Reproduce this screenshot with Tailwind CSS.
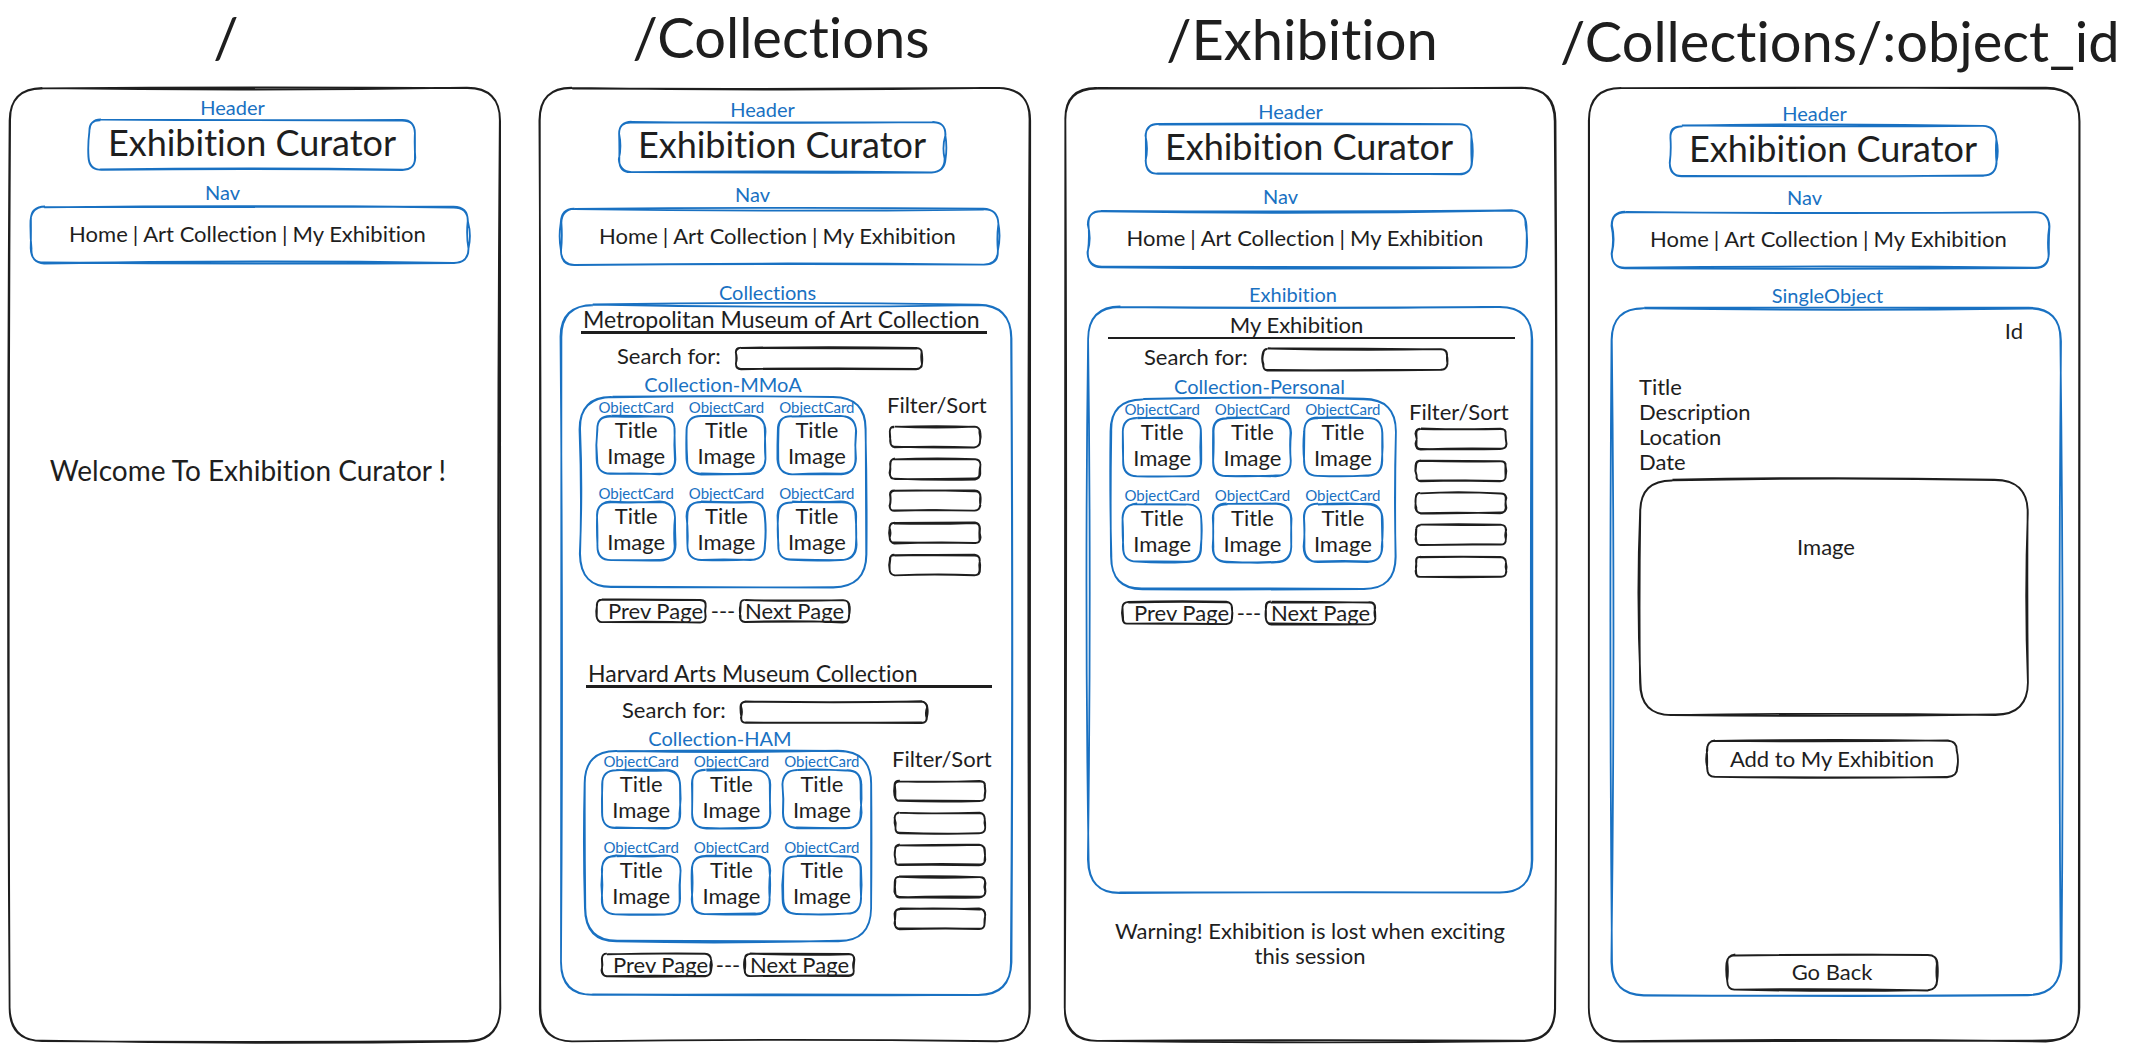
<!DOCTYPE html>
<html lang="en">
<head>
<meta charset="utf-8">
<meta name="viewport" content="width=device-width, initial-scale=1">
<title>Exhibition Curator wireframes</title>
<script src="https://cdn.jsdelivr.net/npm/@tailwindcss/browser@4"></script>
</head>
<body class="bg-white font-['Lato',sans-serif] text-[22px] leading-6 text-[#1e1e1e] [font-variant-ligatures:none]">
<main class="flex min-h-screen pl-[9px] pr-[61px] pb-2.5">

  <!-- Home -->
  <section class="mr-[38px] flex min-w-0 flex-1 flex-col">
    <h1 class="h-[87px] pt-0.5 pr-[58px] text-center text-[56px] leading-[70px] whitespace-nowrap">/</h1>
    <div data-sketch class="relative flex flex-1 flex-col pt-2 pr-[19px] pl-[21px]">
      <div class="pr-[47px] text-center text-[20px] text-[#1971c2]">Header</div>
      <header data-sketch class="relative ml-[58px] h-[52px] w-[328px] text-center text-[36px] leading-[46px] text-[#1971c2]"><span class="text-[#1e1e1e]">Exhibition Curator</span></header>
      <div class="mt-[9px] pr-[67px] text-center text-[20px] text-[#1971c2]">Nav</div>
      <nav data-sketch class="relative mt-0.5 mr-[13px] flex h-[58px] items-center justify-center gap-[5px] pr-1 pb-0.5 whitespace-nowrap text-[#1971c2]">
        <a href="#home" class="text-[#1e1e1e]">Home</a><span class="text-[#1e1e1e]">|</span><a href="#collections" class="text-[#1e1e1e]">Art Collection</a><span class="text-[#1e1e1e]">|</span><a href="#exhibition" class="text-[#1e1e1e]">My Exhibition</a>
      </nav>
      <p class="mt-[188px] pr-4 text-center text-[28px] leading-9 whitespace-nowrap">Welcome To Exhibition Curator !</p>
    </div>
  </section>

  <!-- Collections -->
  <section class="mr-[33px] flex min-w-0 flex-1 flex-col">
    <h1 class="h-[87px] pt-0.5 pr-2 text-center text-[56px] leading-[70px] whitespace-nowrap">/Collections</h1>
    <div data-sketch class="relative flex flex-1 flex-col pt-2.5 pr-[19px] pl-[21px]">
      <div class="pr-[47px] text-center text-[20px] text-[#1971c2]">Header</div>
      <header data-sketch class="relative ml-[58px] h-[52px] w-[328px] text-center text-[36px] leading-[46px] text-[#1971c2]"><span class="text-[#1e1e1e]">Exhibition Curator</span></header>
      <div class="mt-[9px] pr-[67px] text-center text-[20px] text-[#1971c2]">Nav</div>
      <nav data-sketch class="relative mt-0.5 mr-[13px] flex h-[58px] items-center justify-center gap-[5px] pr-1 pb-0.5 whitespace-nowrap text-[#1971c2]">
        <a href="#home" class="text-[#1e1e1e]">Home</a><span class="text-[#1e1e1e]">|</span><a href="#collections" class="text-[#1e1e1e]">Art Collection</a><span class="text-[#1e1e1e]">|</span><a href="#exhibition" class="text-[#1e1e1e]">My Exhibition</a>
      </nav>
      <div class="mt-3.5 pr-[37px] text-center text-[20px] text-[#1971c2]">Collections</div>
      <div data-sketch class="relative mb-[46px] flex-1 text-[#1971c2]">

        <section class="pt-[3px] pr-[19px] pl-[19px] text-[#1e1e1e]">
          <h2 class="ml-1 text-[23px] whitespace-nowrap">Metropolitan Museum of Art Collection</h2>
          <hr class="mr-1.5 ml-0.5 border-t-[3px] border-[#1e1e1e]">
          <div class="mt-2.5 flex pl-[38px]">
            <label for="search-met" class="w-[118px] whitespace-nowrap">Search for:</label>
            <span data-sketch class="relative mt-[3px] h-[23px] w-1/2"><input id="search-met" type="text" class="block size-full bg-transparent px-2 text-base outline-none"></span>
          </div>
          <div class="mt-0.5 flex gap-5">
            <div class="min-w-0 flex-1">
              <h3 class="text-center text-[20px] text-[#1971c2]">Collection-MMoA</h3>
              <div data-sketch class="relative grid grid-cols-3 gap-2.5 pt-[3px] pr-2.5 pb-[27px] pl-[17px] text-center text-[#1971c2]">
                <article><div class="text-[15px] leading-4">ObjectCard</div><div data-sketch class="relative h-[60px] pt-0.5 leading-[26px]"><p class="text-[#1e1e1e]">Title</p><p class="text-[#1e1e1e]">Image</p></div></article>
                <article><div class="text-[15px] leading-4">ObjectCard</div><div data-sketch class="relative h-[60px] pt-0.5 leading-[26px]"><p class="text-[#1e1e1e]">Title</p><p class="text-[#1e1e1e]">Image</p></div></article>
                <article><div class="text-[15px] leading-4">ObjectCard</div><div data-sketch class="relative h-[60px] pt-0.5 leading-[26px]"><p class="text-[#1e1e1e]">Title</p><p class="text-[#1e1e1e]">Image</p></div></article>
                <article><div class="text-[15px] leading-4">ObjectCard</div><div data-sketch class="relative h-[60px] pt-0.5 leading-[26px]"><p class="text-[#1e1e1e]">Title</p><p class="text-[#1e1e1e]">Image</p></div></article>
                <article><div class="text-[15px] leading-4">ObjectCard</div><div data-sketch class="relative h-[60px] pt-0.5 leading-[26px]"><p class="text-[#1e1e1e]">Title</p><p class="text-[#1e1e1e]">Image</p></div></article>
                <article><div class="text-[15px] leading-4">ObjectCard</div><div data-sketch class="relative h-[60px] pt-0.5 leading-[26px]"><p class="text-[#1e1e1e]">Title</p><p class="text-[#1e1e1e]">Image</p></div></article>
              </div>
            </div>
            <div class="w-[106px] pt-[21px]">
              <h3 class="whitespace-nowrap">Filter/Sort</h3>
              <div class="mt-[9px] ml-0.5 flex w-[92px] flex-col gap-2.5">
                <span data-sketch class="relative h-[22px]"><select aria-label="Filter 1" class="block size-full appearance-none bg-transparent"><option></option></select></span>
                <span data-sketch class="relative h-[22px]"><select aria-label="Filter 2" class="block size-full appearance-none bg-transparent"><option></option></select></span>
                <span data-sketch class="relative h-[22px]"><select aria-label="Filter 3" class="block size-full appearance-none bg-transparent"><option></option></select></span>
                <span data-sketch class="relative h-[22px]"><select aria-label="Filter 4" class="block size-full appearance-none bg-transparent"><option></option></select></span>
                <span data-sketch class="relative h-[22px]"><select aria-label="Filter 5" class="block size-full appearance-none bg-transparent"><option></option></select></span>
              </div>
            </div>
          </div>
          <div class="mt-[11px] flex items-center pl-[17px]">
            <button type="button" data-sketch class="relative h-6 w-[111px] pl-2 whitespace-nowrap">Prev Page</button>
            <span class="w-8 text-center">---</span>
            <button type="button" data-sketch class="relative h-6 w-[111px] whitespace-nowrap">Next Page</button>
          </div>
        </section>

        <section class="mt-[38px] pr-3.5 pl-6 text-[#1e1e1e]">
          <h2 class="ml-1 text-[23px] whitespace-nowrap">Harvard Arts Museum Collection</h2>
          <hr class="mr-1.5 ml-0.5 border-t-[3px] border-[#1e1e1e]">
          <div class="mt-2.5 flex pl-[38px]">
            <label for="search-ham" class="w-[118px] whitespace-nowrap">Search for:</label>
            <span data-sketch class="relative mt-[3px] h-[23px] w-1/2"><input id="search-ham" type="text" class="block size-full bg-transparent px-2 text-base outline-none"></span>
          </div>
          <div class="mt-0.5 flex gap-5">
            <div class="min-w-0 flex-1">
              <h3 class="pr-4 text-center text-[20px] text-[#1971c2]">Collection-HAM</h3>
              <div data-sketch class="relative grid grid-cols-3 gap-2.5 pt-[3px] pr-2.5 pb-[27px] pl-[17px] text-center text-[#1971c2]">
                <article><div class="text-[15px] leading-4">ObjectCard</div><div data-sketch class="relative h-[60px] pt-0.5 leading-[26px]"><p class="text-[#1e1e1e]">Title</p><p class="text-[#1e1e1e]">Image</p></div></article>
                <article><div class="text-[15px] leading-4">ObjectCard</div><div data-sketch class="relative h-[60px] pt-0.5 leading-[26px]"><p class="text-[#1e1e1e]">Title</p><p class="text-[#1e1e1e]">Image</p></div></article>
                <article><div class="text-[15px] leading-4">ObjectCard</div><div data-sketch class="relative h-[60px] pt-0.5 leading-[26px]"><p class="text-[#1e1e1e]">Title</p><p class="text-[#1e1e1e]">Image</p></div></article>
                <article><div class="text-[15px] leading-4">ObjectCard</div><div data-sketch class="relative h-[60px] pt-0.5 leading-[26px]"><p class="text-[#1e1e1e]">Title</p><p class="text-[#1e1e1e]">Image</p></div></article>
                <article><div class="text-[15px] leading-4">ObjectCard</div><div data-sketch class="relative h-[60px] pt-0.5 leading-[26px]"><p class="text-[#1e1e1e]">Title</p><p class="text-[#1e1e1e]">Image</p></div></article>
                <article><div class="text-[15px] leading-4">ObjectCard</div><div data-sketch class="relative h-[60px] pt-0.5 leading-[26px]"><p class="text-[#1e1e1e]">Title</p><p class="text-[#1e1e1e]">Image</p></div></article>
              </div>
            </div>
            <div class="w-[106px] pt-[21px]">
              <h3 class="whitespace-nowrap">Filter/Sort</h3>
              <div class="mt-[9px] ml-0.5 flex w-[92px] flex-col gap-2.5">
                <span data-sketch class="relative h-[22px]"><select aria-label="Filter 1" class="block size-full appearance-none bg-transparent"><option></option></select></span>
                <span data-sketch class="relative h-[22px]"><select aria-label="Filter 2" class="block size-full appearance-none bg-transparent"><option></option></select></span>
                <span data-sketch class="relative h-[22px]"><select aria-label="Filter 3" class="block size-full appearance-none bg-transparent"><option></option></select></span>
                <span data-sketch class="relative h-[22px]"><select aria-label="Filter 4" class="block size-full appearance-none bg-transparent"><option></option></select></span>
                <span data-sketch class="relative h-[22px]"><select aria-label="Filter 5" class="block size-full appearance-none bg-transparent"><option></option></select></span>
              </div>
            </div>
          </div>
          <div class="mt-[11px] flex items-center pl-[17px]">
            <button type="button" data-sketch class="relative h-6 w-[111px] pl-2 whitespace-nowrap">Prev Page</button>
            <span class="w-8 text-center">---</span>
            <button type="button" data-sketch class="relative h-6 w-[111px] whitespace-nowrap">Next Page</button>
          </div>
        </section>
      </div>
    </div>
  </section>

  <!-- Exhibition -->
  <section class="mr-8 flex min-w-0 flex-1 flex-col">
    <h1 class="h-[87px] pt-1 pr-4 text-center text-[56px] leading-[70px] whitespace-nowrap">/Exhibition</h1>
    <div data-sketch class="relative flex flex-1 flex-col pt-3 pr-[23px] pl-[23px]">
      <div class="pr-[39px] text-center text-[20px] text-[#1971c2]">Header</div>
      <header data-sketch class="relative ml-[58px] h-[52px] w-[328px] text-center text-[36px] leading-[46px] text-[#1971c2]"><span class="text-[#1e1e1e]">Exhibition Curator</span></header>
      <div class="mt-[9px] pr-[59px] text-center text-[20px] text-[#1971c2]">Nav</div>
      <nav data-sketch class="relative mt-0.5 mr-1.5 flex h-[58px] items-center justify-center gap-[5px] pr-1 pb-0.5 whitespace-nowrap text-[#1971c2]">
        <a href="#home" class="text-[#1e1e1e]">Home</a><span class="text-[#1e1e1e]">|</span><a href="#collections" class="text-[#1e1e1e]">Art Collection</a><span class="text-[#1e1e1e]">|</span><a href="#exhibition" class="text-[#1e1e1e]">My Exhibition</a>
      </nav>
      <div class="mt-3.5 pr-[34px] text-center text-[20px] text-[#1971c2]">Exhibition</div>
      <div data-sketch class="relative flex-1 text-[#1971c2]">
        <section class="pt-1.5 pr-[18px] pl-[23px] text-[#1e1e1e]">
          <h2 class="pr-8 text-center leading-[25px]">My Exhibition</h2>
          <hr class="-ml-0.5 border-t-2 border-[#1e1e1e]">
          <div class="mt-1.5 flex pl-[34px]">
            <label for="search-mine" class="w-[118px] whitespace-nowrap">Search for:</label>
            <span data-sketch class="relative mt-[3px] h-[23px] w-1/2"><input id="search-mine" type="text" class="block size-full bg-transparent px-2 text-base outline-none"></span>
          </div>
          <div class="mt-[3px] flex gap-3">
            <div class="min-w-0 flex-1">
              <h3 class="pl-3 text-center text-[20px] text-[#1971c2]">Collection-Personal</h3>
              <div data-sketch class="relative grid grid-cols-3 gap-2.5 pt-[3px] pr-3.5 pb-[27px] pl-3 text-center text-[#1971c2]">
                <article><div class="text-[15px] leading-4">ObjectCard</div><div data-sketch class="relative h-[60px] pt-0.5 leading-[26px]"><p class="text-[#1e1e1e]">Title</p><p class="text-[#1e1e1e]">Image</p></div></article>
                <article><div class="text-[15px] leading-4">ObjectCard</div><div data-sketch class="relative h-[60px] pt-0.5 leading-[26px]"><p class="text-[#1e1e1e]">Title</p><p class="text-[#1e1e1e]">Image</p></div></article>
                <article><div class="text-[15px] leading-4">ObjectCard</div><div data-sketch class="relative h-[60px] pt-0.5 leading-[26px]"><p class="text-[#1e1e1e]">Title</p><p class="text-[#1e1e1e]">Image</p></div></article>
                <article><div class="text-[15px] leading-4">ObjectCard</div><div data-sketch class="relative h-[60px] pt-0.5 leading-[26px]"><p class="text-[#1e1e1e]">Title</p><p class="text-[#1e1e1e]">Image</p></div></article>
                <article><div class="text-[15px] leading-4">ObjectCard</div><div data-sketch class="relative h-[60px] pt-0.5 leading-[26px]"><p class="text-[#1e1e1e]">Title</p><p class="text-[#1e1e1e]">Image</p></div></article>
                <article><div class="text-[15px] leading-4">ObjectCard</div><div data-sketch class="relative h-[60px] pt-0.5 leading-[26px]"><p class="text-[#1e1e1e]">Title</p><p class="text-[#1e1e1e]">Image</p></div></article>
              </div>
            </div>
            <div class="w-[106px] pt-[26px]">
              <h3 class="whitespace-nowrap">Filter/Sort</h3>
              <div class="mt-1 ml-1.5 flex w-[92px] flex-col gap-2.5">
                <span data-sketch class="relative h-[22px]"><select aria-label="Filter 1" class="block size-full appearance-none bg-transparent"><option></option></select></span>
                <span data-sketch class="relative h-[22px]"><select aria-label="Filter 2" class="block size-full appearance-none bg-transparent"><option></option></select></span>
                <span data-sketch class="relative h-[22px]"><select aria-label="Filter 3" class="block size-full appearance-none bg-transparent"><option></option></select></span>
                <span data-sketch class="relative h-[22px]"><select aria-label="Filter 4" class="block size-full appearance-none bg-transparent"><option></option></select></span>
                <span data-sketch class="relative h-[22px]"><select aria-label="Filter 5" class="block size-full appearance-none bg-transparent"><option></option></select></span>
              </div>
            </div>
          </div>
          <div class="mt-[11px] flex items-center pl-3">
            <button type="button" data-sketch class="relative h-6 w-[111px] pl-2 whitespace-nowrap">Prev Page</button>
            <span class="w-8 text-center">---</span>
            <button type="button" data-sketch class="relative h-6 w-[111px] whitespace-nowrap">Next Page</button>
          </div>
        </section>
      </div>
      <p class="mt-6 mb-[74px] px-4 text-center leading-[25px]">Warning! Exhibition is lost when exciting this session</p>
    </div>
  </section>

  <!-- Single object -->
  <section class="flex min-w-0 flex-1 flex-col">
    <h1 class="-ml-7 h-[87px] pt-1.5 text-[56px] leading-[70px] whitespace-nowrap">/Collections/:object_id</h1>
    <div data-sketch class="relative flex flex-1 flex-col pt-3.5 pr-[18px] pl-[23px]">
      <div class="pr-[44px] text-center text-[20px] text-[#1971c2]">Header</div>
      <header data-sketch class="relative ml-[58px] h-[52px] w-[328px] text-center text-[36px] leading-[46px] text-[#1971c2]"><span class="text-[#1e1e1e]">Exhibition Curator</span></header>
      <div class="mt-2 pr-[64px] text-center text-[20px] text-[#1971c2]">Nav</div>
      <nav data-sketch class="relative mt-0.5 mr-3 flex h-[58px] items-center justify-center gap-[5px] pr-1 pb-0.5 whitespace-nowrap text-[#1971c2]">
        <a href="#home" class="text-[#1e1e1e]">Home</a><span class="text-[#1e1e1e]">|</span><a href="#collections" class="text-[#1e1e1e]">Art Collection</a><span class="text-[#1e1e1e]">|</span><a href="#exhibition" class="text-[#1e1e1e]">My Exhibition</a>
      </nav>
      <div class="mt-3.5 pr-[18px] text-center text-[20px] text-[#1971c2]">SingleObject</div>
      <article data-sketch class="relative mb-[46px] flex flex-1 flex-col pt-[11px] pr-[33px] pb-[5px] pl-7 leading-[25px] text-[#1971c2]">
        <p class="pr-1.5 text-right text-[#1e1e1e]">Id</p>
        <ul class="mt-[31px] text-[#1e1e1e]">
          <li>Title</li>
          <li>Description</li>
          <li>Location</li>
          <li>Date</li>
        </ul>
        <div data-sketch class="relative mt-[5px] h-[237px] pt-[55px] pr-4 text-center text-[#1e1e1e]">Image</div>
        <button type="button" data-sketch class="relative mt-6 mr-1 h-[38px] w-[252px] self-center pb-0.5 text-[#1e1e1e]">Add to My Exhibition</button>
        <button type="button" data-sketch class="relative mt-auto mr-1 h-[37px] w-[212px] self-center pb-0.5 text-[#1e1e1e]">Go Back</button>
      </article>
    </div>
  </section>
</main>

<script>
// Draws a hand-drawn double outline round every [data-sketch] element.
const NS = 'http://www.w3.org/2000/svg';

function generator(seed) {
  let s = seed * 7919 + 17;
  return () => {
    s = (s * 48271) % 2147483647;
    return s / 2147483647 - 0.5;
  };
}

function outline(w, h, rand) {
  const r = Math.min(33, Math.min(w, h) / 4);
  const bow = Math.min(4, Math.max(w, h) / 150 + 1);
  const j = () => rand() * 1.2;
  const p = (x, y) => (x + j()).toFixed(1) + ' ' + (y + j()).toFixed(1);
  const b = () => rand() * bow * 2;
  const x0 = 1, y0 = 1, x1 = w - 1, y1 = h - 1;
  return `M${p(r, y0)}Q${w / 2} ${y0 + b()} ${p(x1 - r, y0)}Q${p(x1, y0)} ${p(x1, y0 + r)}` +
    `Q${x1 + b()} ${h / 2} ${p(x1, y1 - r)}Q${p(x1, y1)} ${p(x1 - r, y1)}` +
    `Q${w / 2} ${y1 + b()} ${p(r, y1)}Q${p(x0, y1)} ${p(x0, y1 - r)}` +
    `Q${x0 + b()} ${h / 2} ${p(x0, r)}Q${p(x0, y0)} ${p(r, y0)}`;
}

function draw(el, seed) {
  const w = el.offsetWidth, h = el.offsetHeight;
  const rand = generator(seed);
  el.sketchPath.setAttribute('d', outline(w, h, rand) + outline(w, h, rand));
}

document.querySelectorAll('[data-sketch]').forEach((el, i) => {
  const svg = document.createElementNS(NS, 'svg');
  svg.setAttribute('class', 'pointer-events-none absolute inset-0 size-full overflow-visible');
  svg.setAttribute('aria-hidden', 'true');
  const path = document.createElementNS(NS, 'path');
  path.setAttribute('fill', 'none');
  path.setAttribute('stroke', 'currentColor');
  path.setAttribute('stroke-width', '1.8');
  svg.appendChild(path);
  el.appendChild(svg);
  el.sketchPath = path;
  draw(el, i + 1);
  new ResizeObserver(() => draw(el, i + 1)).observe(el);
});
</script>
</body>
</html>
